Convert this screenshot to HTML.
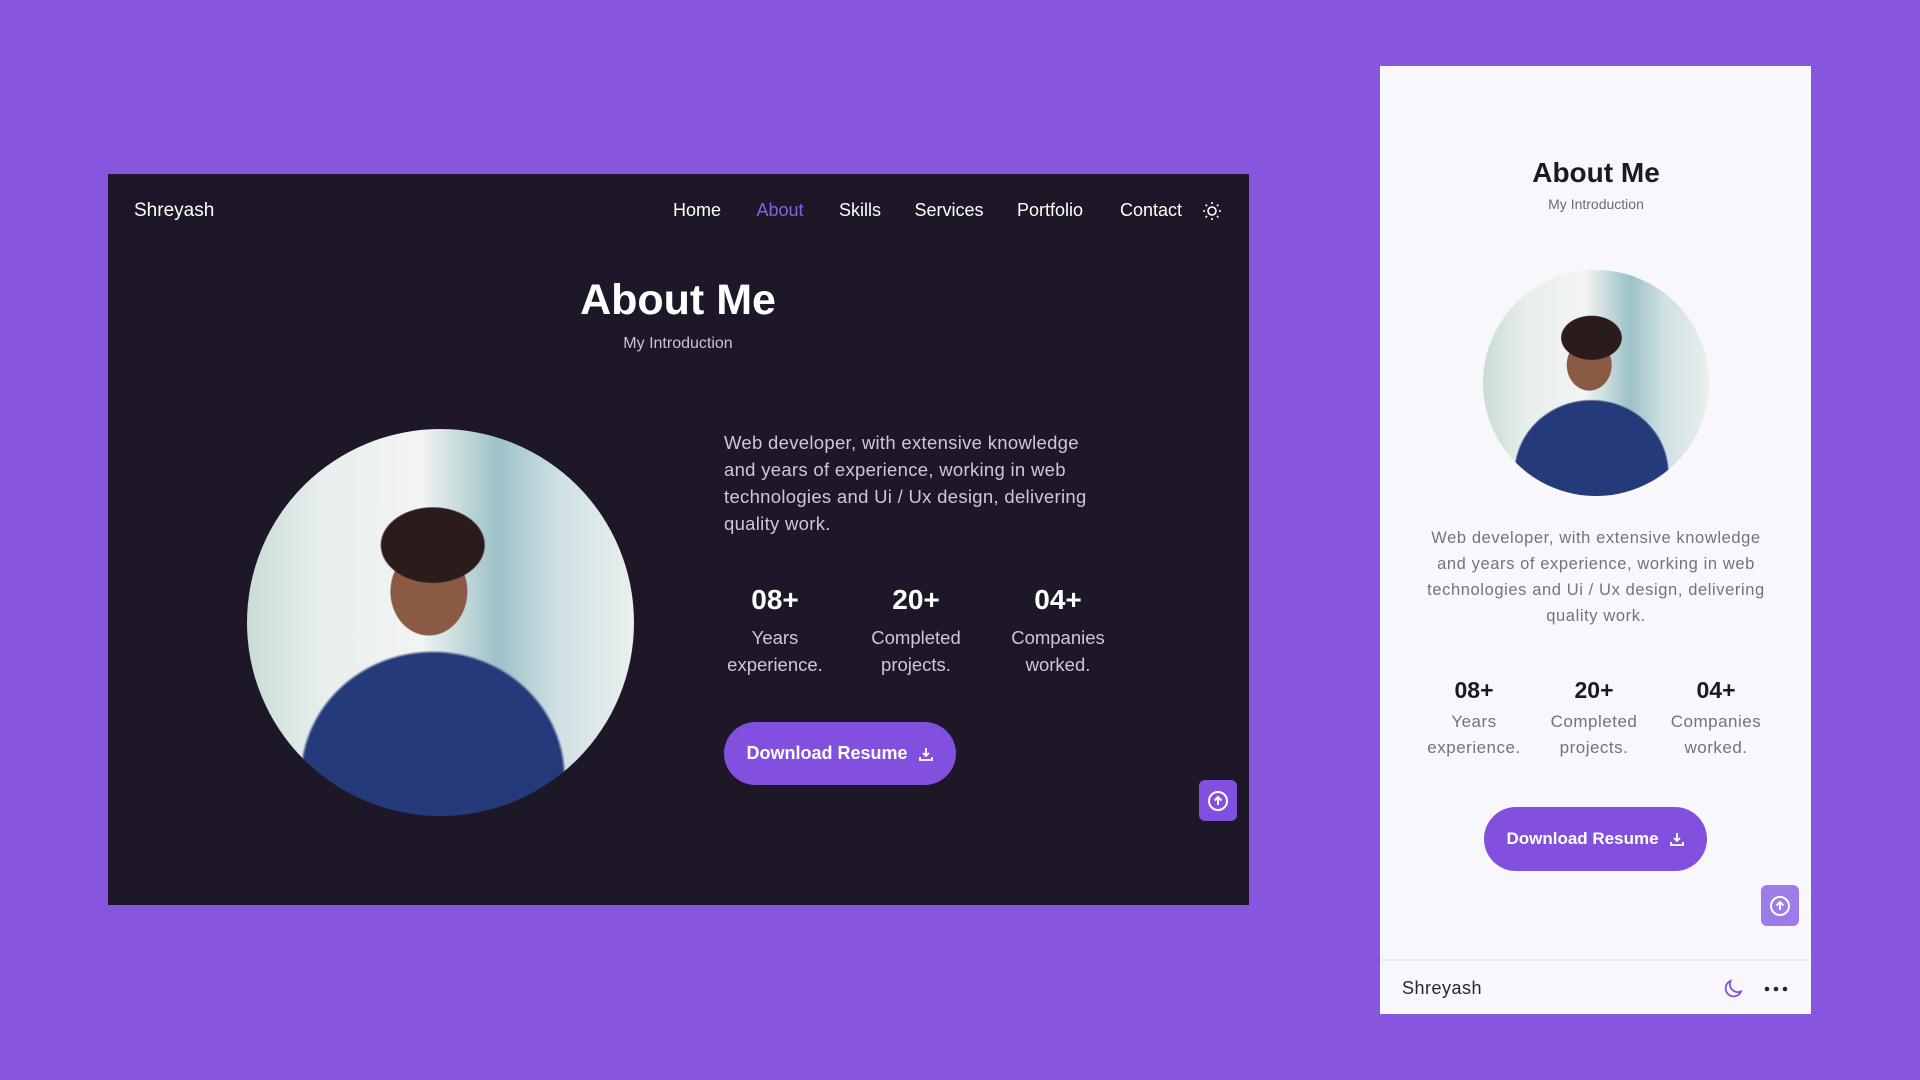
<!DOCTYPE html>
<html><head><meta charset="utf-8"><style>
*{margin:0;padding:0;box-sizing:border-box}
body{width:1920px;height:1080px;background:#8656df;font-family:"Liberation Sans",sans-serif;position:relative;overflow:hidden}
.a{position:absolute}
.c{transform:translateX(-50%);white-space:nowrap;text-align:center}
#dk{left:108px;top:174px;width:1141px;height:731px;background:#1e1727}
#lt{left:1380px;top:66px;width:431px;height:948px;background:#f8f7fc}
.nav{top:200px;font-size:18px;color:#fff;font-weight:500}
.photo{border-radius:50%;overflow:hidden;background:
radial-gradient(ellipse 22% 16% at 48% 30%,#2a1c1a 60%,transparent 62%),
radial-gradient(ellipse 14% 16% at 47% 42%,#8a5a45 70%,transparent 72%),
radial-gradient(ellipse 42% 40% at 48% 90%,#243a7a 80%,transparent 82%),
linear-gradient(90deg,#c9dcd6 0%,#e8efec 20%,#f2f4f2 45%,#9cc1c8 65%,#cfe0e3 80%,#e9efee 100%)}
.btn{background:#8250df;color:#fff;border-radius:40px;font-weight:bold;display:flex;align-items:center;justify-content:center;gap:10px}
.up{border-radius:6px;display:flex;align-items:center;justify-content:center}
</style></head><body>
<div id="dk" class="a"></div>
<div id="lt" class="a"></div>

<div class="a" style="left:134px;top:200px;font-size:19px;color:#fff;font-weight:500">Shreyash</div>
<div class="a nav c" style="left:697px">Home</div>
<div class="a nav c" style="left:780px;color:#8b5ee6">About</div>
<div class="a nav c" style="left:860px">Skills</div>
<div class="a nav c" style="left:949px">Services</div>
<div class="a nav c" style="left:1050px">Portfolio</div>
<div class="a nav c" style="left:1151px">Contact</div>
<svg class="a" style="left:1202px;top:201px" width="20" height="20" viewBox="0 0 20 20" fill="none" stroke="#fff" stroke-width="1.6"><circle cx="10" cy="10" r="4"/><path d="M10 1v2M10 17v2M1 10h2M17 10h2M3.6 3.6l1.4 1.4M15 15l1.4 1.4M3.6 16.4L5 15M15 5l1.4-1.4"/></svg>

<div class="a c" style="left:678px;top:276px;font-size:43px;font-weight:bold;color:#fff">About Me</div>
<div class="a c" style="left:678px;top:335px;font-size:16px;color:#c9c3d3">My Introduction</div>
<div class="a photo" style="left:247px;top:429px;width:387px;height:387px"></div>
<div class="a" style="left:724px;top:429px;width:390px;font-size:18.5px;line-height:27px;color:#cdc7d6;letter-spacing:0.3px">Web developer, with extensive knowledge and years of experience, working in web technologies and Ui / Ux design, delivering quality work.</div>
<div class="a c" style="left:775px;top:584px;font-size:28px;font-weight:bold;color:#fff">08+</div>
<div class="a c" style="left:916px;top:584px;font-size:28px;font-weight:bold;color:#fff">20+</div>
<div class="a c" style="left:1058px;top:584px;font-size:28px;font-weight:bold;color:#fff">04+</div>
<div class="a c" style="left:775px;top:624px;font-size:18.5px;line-height:27px;color:#cdc7d6">Years<br>experience.</div>
<div class="a c" style="left:916px;top:624px;font-size:18.5px;line-height:27px;color:#cdc7d6">Completed<br>projects.</div>
<div class="a c" style="left:1058px;top:624px;font-size:18.5px;line-height:27px;color:#cdc7d6">Companies<br>worked.</div>
<div class="a btn" style="left:724px;top:722px;width:232px;height:63px;font-size:18px">Download Resume <svg width="16" height="16" viewBox="0 0 16 16" fill="none" stroke="#fff" stroke-width="1.8"><path d="M8 2v8M5 7l3 3 3-3M2 11v3h12v-3"/></svg></div>
<div class="a up" style="left:1199px;top:780px;width:38px;height:41px;background:#8250df"><svg width="24" height="24" viewBox="0 0 24 24" fill="none" stroke="#fff" stroke-width="2"><circle cx="12" cy="12" r="9"/><path d="M12 16V8M8.5 11.5L12 8l3.5 3.5"/></svg></div>

<div class="a c" style="left:1596px;top:157px;font-size:28px;font-weight:bold;color:#1e1727">About Me</div>
<div class="a c" style="left:1596px;top:196px;font-size:14px;color:#6e6878">My Introduction</div>
<div class="a photo" style="left:1483px;top:270px;width:226px;height:226px"></div>
<div class="a" style="left:1416px;top:525px;width:360px;text-align:center;font-size:16.5px;line-height:26px;color:#77717f;letter-spacing:0.6px">Web developer, with extensive knowledge<br>and years of experience, working in web<br>technologies and Ui / Ux design, delivering<br>quality work.</div>
<div class="a c" style="left:1474px;top:677px;font-size:23px;font-weight:bold;color:#1e1727">08+</div>
<div class="a c" style="left:1594px;top:677px;font-size:23px;font-weight:bold;color:#1e1727">20+</div>
<div class="a c" style="left:1716px;top:677px;font-size:23px;font-weight:bold;color:#1e1727">04+</div>
<div class="a c" style="left:1474px;top:709px;font-size:17px;line-height:26px;color:#77717f;letter-spacing:0.5px">Years<br>experience.</div>
<div class="a c" style="left:1594px;top:709px;font-size:17px;line-height:26px;color:#77717f;letter-spacing:0.5px">Completed<br>projects.</div>
<div class="a c" style="left:1716px;top:709px;font-size:17px;line-height:26px;color:#77717f;letter-spacing:0.5px">Companies<br>worked.</div>
<div class="a btn" style="left:1484px;top:807px;width:223px;height:64px;font-size:17px">Download Resume <svg width="16" height="16" viewBox="0 0 16 16" fill="none" stroke="#fff" stroke-width="1.8"><path d="M8 2v8M5 7l3 3 3-3M2 11v3h12v-3"/></svg></div>
<div class="a up" style="left:1761px;top:885px;width:38px;height:41px;background:#9d7be8"><svg width="24" height="24" viewBox="0 0 24 24" fill="none" stroke="#fff" stroke-width="2"><circle cx="12" cy="12" r="9"/><path d="M12 16V8M8.5 11.5L12 8l3.5 3.5"/></svg></div>
<div class="a" style="left:1380px;top:959px;width:431px;height:2px;background:#ebe9ef"></div>
<div class="a" style="left:1402px;top:978px;font-size:18px;color:#2a2430;font-weight:500;letter-spacing:0.5px">Shreyash</div>
<svg class="a" style="left:1722px;top:978px" width="22" height="22" viewBox="0 0 22 22" fill="none" stroke="#8250df" stroke-width="1.8"><path d="M19 13.5A8 8 0 0 1 8.5 3 8 8 0 1 0 19 13.5z"/></svg>
<svg class="a" style="left:1764px;top:986px" width="24" height="6"><circle cx="3" cy="3" r="2.3" fill="#2a2430"/><circle cx="12" cy="3" r="2.3" fill="#2a2430"/><circle cx="21" cy="3" r="2.3" fill="#2a2430"/></svg>
</body></html>
